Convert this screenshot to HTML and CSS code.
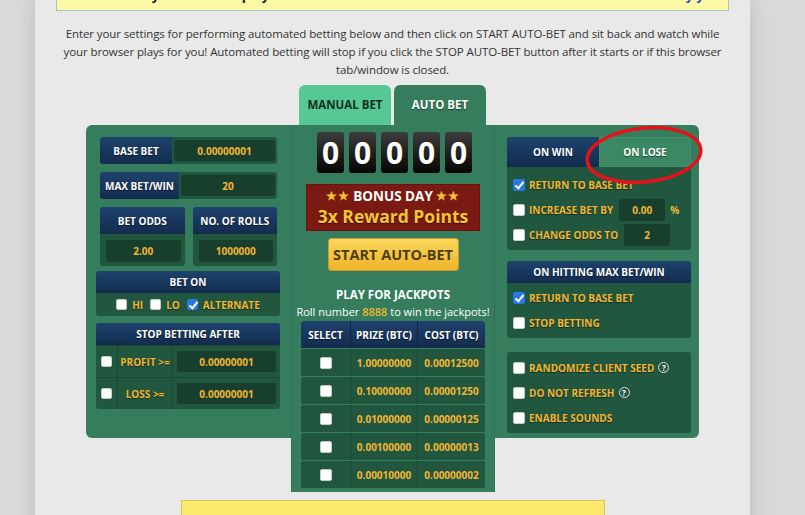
FILE: index.html
```html
<!DOCTYPE html>
<html lang="en">
<head>
    <meta charset="UTF-8">
    <meta name="viewport" content="width=device-width, initial-scale=1.0">
    <title>Auto Bet</title>
    <link rel="stylesheet" href="styles.css">
</head>
<body>
    <div class="page">
        <div class="notice">Auto-bet is only available to players who have verified their email address and enabled 2FA. <a href="#">Verify your email address</a></div>

        <p class="intro">Enter your settings for performing automated betting below and then click on START AUTO-BET and sit back and watch while your browser plays for you! Automated betting will stop if you click the STOP AUTO-BET button after it starts or if this browser tab/window is closed.</p>

        <div class="bet-tabs">
            <a class="bet-tab manual" href="#">MANUAL BET</a>
            <a class="bet-tab auto" href="#">AUTO BET</a>
        </div>

        <div class="board">
            <div class="side side-left">
                <div class="field-row">
                    <div class="field-lbl">BASE BET</div>
                    <div class="field-val"><div class="field-inp">0.00000001</div></div>
                </div>
                <div class="field-row">
                    <div class="field-lbl">MAX BET/WIN</div>
                    <div class="field-val"><div class="field-inp">20</div></div>
                </div>
                <div class="pair">
                    <div class="pair-box">
                        <div class="box-head tall">BET ODDS</div>
                        <div class="pair-body"><div class="field-inp">2.00</div></div>
                    </div>
                    <div class="pair-box">
                        <div class="box-head tall">NO. OF ROLLS</div>
                        <div class="pair-body"><div class="field-inp">1000000</div></div>
                    </div>
                </div>
                <div class="group">
                    <div class="box-head">BET ON</div>
                    <div class="bet-on-body">
                        <span class="cb"></span><span class="opt">HI</span>
                        <span class="cb"></span><span class="opt">LO</span>
                        <span class="cb on"></span><span class="opt">ALTERNATE</span>
                    </div>
                </div>
                <div class="group">
                    <div class="box-head">STOP BETTING AFTER</div>
                    <div class="stop-row">
                        <div class="stop-cb"><span class="cb"></span></div>
                        <div class="stop-lbl">PROFIT &gt;=</div>
                        <div class="stop-val"><div class="field-inp">0.00000001</div></div>
                    </div>
                    <div class="stop-row">
                        <div class="stop-cb"><span class="cb"></span></div>
                        <div class="stop-lbl">LOSS &gt;=</div>
                        <div class="stop-val"><div class="field-inp">0.00000001</div></div>
                    </div>
                </div>
            </div>

            <div class="center">
                <div class="counter">
                    <span class="digit">0</span>
                    <span class="digit">0</span>
                    <span class="digit">0</span>
                    <span class="digit">0</span>
                    <span class="digit">0</span>
                </div>
                <div class="bonus">
                    <div class="bonus-top"><span class="stars">★★</span> BONUS DAY <span class="stars">★★</span></div>
                    <div class="bonus-main">3x Reward Points</div>
                </div>
                <button class="start-btn">START AUTO-BET</button>
                <div class="jp-title">PLAY FOR JACKPOTS</div>
                <div class="jp-sub">Roll number <span class="hl">8888</span> to win the jackpots!</div>
                <div class="jp-table">
                    <div class="jp-head">
                        <span class="c1">SELECT</span><span class="c2">PRIZE (BTC)</span><span class="c3">COST (BTC)</span>
                    </div>
                    <div class="jp-row">
                        <span class="c1"><span class="cb big"></span></span><span class="c2">1.00000000</span><span class="c3">0.00012500</span>
                    </div>
                    <div class="jp-row">
                        <span class="c1"><span class="cb big"></span></span><span class="c2">0.10000000</span><span class="c3">0.00001250</span>
                    </div>
                    <div class="jp-row">
                        <span class="c1"><span class="cb big"></span></span><span class="c2">0.01000000</span><span class="c3">0.00000125</span>
                    </div>
                    <div class="jp-row">
                        <span class="c1"><span class="cb big"></span></span><span class="c2">0.00100000</span><span class="c3">0.00000013</span>
                    </div>
                    <div class="jp-row">
                        <span class="c1"><span class="cb big"></span></span><span class="c2">0.00010000</span><span class="c3">0.00000002</span>
                    </div>
                </div>
            </div>

            <div class="side side-right">
                <div class="win-lose">
                    <div class="wl-tabs">
                        <div class="wl-tab win">ON WIN</div>
                        <div class="wl-tab lose">ON LOSE</div>
                    </div>
                    <div class="opt-list first">
                        <div class="opt-row"><span class="cb big on"></span><span class="opt">RETURN TO BASE BET</span></div>
                        <div class="opt-row"><span class="cb big"></span><span class="opt">INCREASE BET BY</span><span class="mini-inp">0.00</span><span class="pct">%</span></div>
                        <div class="opt-row"><span class="cb big"></span><span class="opt">CHANGE ODDS TO</span><span class="mini-inp">2</span></div>
                    </div>
                </div>
                <div class="right-box">
                    <div class="box-head">ON HITTING MAX BET/WIN</div>
                    <div class="opt-list">
                        <div class="opt-row"><span class="cb big on"></span><span class="opt">RETURN TO BASE BET</span></div>
                        <div class="opt-row"><span class="cb big"></span><span class="opt">STOP BETTING</span></div>
                    </div>
                </div>
                <div class="right-box extra">
                    <div class="opt-list">
                        <div class="opt-row"><span class="cb big"></span><span class="opt">RANDOMIZE CLIENT SEED</span><span class="help">?</span></div>
                        <div class="opt-row"><span class="cb big"></span><span class="opt">DO NOT REFRESH</span><span class="help">?</span></div>
                        <div class="opt-row"><span class="cb big"></span><span class="opt">ENABLE SOUNDS</span></div>
                    </div>
                </div>
            </div>

            <!-- marker ring around the ON LOSE tab -->
            <svg class="ring" width="124" height="66" viewBox="0 0 124 66">
                <ellipse cx="61" cy="33" rx="57" ry="27" transform="rotate(-6 61 33)" fill="none" stroke="#e5121b" stroke-width="3.5"/>
            </svg>
        </div>

        <div class="footer-note"></div>
    </div>
</body>
</html>
```

FILE: styles.css
```css
body{
    margin:0px;
    padding:0px;
    background-color:#d9d9d9;
    font-family:"Open Sans", sans-serif;
    color:#333;
}

.page{
    width:715px;
    min-height:560px;
    margin-left:35px;
    background-color:#e9e9e9;
    box-shadow:0 0 20px rgba(0,0,0,.14);
    display:flow-root;
}

.notice{
    box-sizing:border-box;
    height:31px;
    margin:-20px 21px 0;
    padding-top:6px;
    background-color:#fcf8a5;
    border:1px solid #a9c5c0;
    font-size:13px;
    font-weight:700;
    line-height:16px;
    text-align:center;
    color:#111;
    overflow:hidden;
    white-space:nowrap;
}

.notice a{
    color:#1d3fd6;
    text-decoration:none;
}

.intro{
    margin:14px 20px 0;
    font-size:11.5px;
    letter-spacing:-0.1px;
    line-height:18px;
    text-align:center;
}

.bet-tabs{
    display:flex;
    justify-content:center;
    gap:3px;
    margin-top:6px;
}

.bet-tab{
    width:92px;
    height:40px;
    line-height:40px;
    text-align:center;
    border-radius:6px 6px 0 0;
    font-size:11.5px;
    font-weight:700;
    text-decoration:none;
}

.bet-tab.manual{
    background-color:#56c895;
    color:#12301f;
}

.bet-tab.auto{
    background-color:#357d5d;
    color:#fff;
    text-shadow:0 1px 1px rgba(0,0,0,.5);
}

/* three columns, the middle one runs past the bottom of the sides */
.board{
    position:relative;
    display:grid;
    grid-template-columns:205px 204px 204px;
    grid-template-rows:313px auto;
    width:613px;
    margin:0 auto;
}

.side{
    grid-row:1;
    background-color:#357d5d;
}

.side-left{
    grid-column:1;
    border-radius:6px 0 0 6px;
    padding:12px 14px 0;
}

.side-right{
    grid-column:3;
    border-radius:0 6px 6px 0;
    padding:12px 8px 0 12px;
}

.field-row{
    display:flex;
    height:27px;
    margin-bottom:8px;
}

.field-lbl, .box-head{
    display:flex;
    align-items:center;
    justify-content:center;
    background:linear-gradient(#1e426d, #132c4e);
    color:#fff;
    font-size:10px;
    font-weight:700;
    text-shadow:0 1px 1px rgba(0,0,0,.6);
    white-space:nowrap;
}

.field-lbl{
    box-sizing:border-box;
    min-width:72px;
    padding:0 5px;
    border-radius:3px 0 0 3px;
}

.field-val{
    flex:1;
    padding:3px 2px;
    background-color:#22573f;
    border-radius:0 3px 3px 0;
}

.field-inp{
    display:flex;
    align-items:center;
    justify-content:center;
    height:100%;
    background-color:#183f2e;
    border-radius:2px;
    color:#f2b632;
    font-size:10px;
    font-weight:700;
}

.pair{
    display:flex;
    gap:8px;
    margin-bottom:5px;
}

.pair-box{
    flex:1;
}

.box-head{
    height:22px;
    border-radius:3px 3px 0 0;
}

.box-head.tall{
    height:27px;
}

.pair-body{
    height:22px;
    padding:6px 4px 4px 6px;
    background-color:#22573f;
    border-radius:0 0 3px 3px;
}

.group{
    margin:0 -3px 7px -4px;
    background-color:#22573f;
    border-radius:3px;
}

.bet-on-body{
    display:flex;
    align-items:center;
    justify-content:center;
    height:23px;
}

.cb{
    position:relative;
    display:inline-block;
    box-sizing:border-box;
    width:11px;
    height:11px;
    flex:none;
    background-color:#fff;
    border:1px solid #c9c9c9;
    border-radius:2px;
}

.cb.big{
    width:12px;
    height:12px;
}

.cb.on{
    background-color:#2a77e6;
    border-color:#2a77e6;
}

.cb.on::after{
    content:"";
    position:absolute;
    left:3px;
    top:0px;
    width:3px;
    height:7px;
    border:solid #fff;
    border-width:0 2px 2px 0;
    transform:rotate(40deg);
}

.opt{
    color:#f2b632;
    font-size:10px;
    font-weight:700;
    text-shadow:0 1px 1px rgba(0,0,0,.5);
    white-space:nowrap;
}

.bet-on-body .opt{
    margin:0 7px 0 5px;
}

.bet-on-body .opt:last-child{
    margin-right:0;
}

.stop-row{
    display:flex;
    height:31px;
    border-top:1px solid #1a4632;
}

.stop-cb{
    display:flex;
    align-items:center;
    justify-content:center;
    width:21px;
    border-right:1px solid #1a4632;
}

.stop-lbl{
    display:flex;
    align-items:center;
    justify-content:center;
    width:54px;
    border-right:1px solid #1a4632;
    color:#f2b632;
    font-size:10px;
    font-weight:700;
    text-shadow:0 1px 1px rgba(0,0,0,.5);
}

.stop-val{
    flex:1;
    padding:5px 4px;
}

.center{
    grid-column:2;
    grid-row:1 / span 2;
    padding:7px 0 4px;
    background-color:#357d5d;
    border-left:1px solid #2d7254;
    border-right:1px solid #2d7254;
    text-align:center;
}

.counter{
    display:flex;
    justify-content:center;
    gap:5px;
    margin-left:3px;
}

.digit{
    width:27px;
    height:41px;
    line-height:41px;
    background:linear-gradient(#3d3d3d, #050505);
    border-radius:3px;
    color:#fff;
    font-size:30px;
    font-weight:700;
}

.bonus{
    box-sizing:border-box;
    width:174px;
    height:47px;
    margin:11px auto 0;
    padding-top:2px;
    background-color:#7b1a12;
    border:1px solid #6b140d;
}

.bonus-top{
    line-height:17px;
    color:#fff;
    font-size:13.5px;
    font-weight:700;
}

.stars{
    color:#f3c42e;
    font-size:11.5px;
    letter-spacing:1px;
    vertical-align:1px;
}

.bonus-main{
    line-height:22px;
    color:#f5c634;
    font-size:17.5px;
    font-weight:700;
    text-shadow:0 1px 1px rgba(0,0,0,.6);
}

.start-btn{
    display:block;
    width:131px;
    height:33px;
    margin:7px auto 0;
    padding:0;
    background:linear-gradient(#f9d85c, #efb22a);
    border:1px solid #c99a2a;
    border-radius:3px;
    color:#4d3e12;
    font-family:"Open Sans", sans-serif;
    font-size:14.5px;
    font-weight:700;
}

.jp-title{
    margin-top:15px;
    line-height:17px;
    color:#fff;
    font-size:11.5px;
    font-weight:700;
}

.jp-sub{
    line-height:17px;
    color:#fff;
    font-size:11px;
}

.jp-sub .hl{
    color:#f2b632;
    font-weight:600;
}

.jp-table{
    width:184px;
    margin:1px auto 0;
}

.jp-head, .jp-row{
    display:flex;
    height:27px;
}

.jp-head{
    background:linear-gradient(#1e426d, #132c4e);
    border-radius:3px 3px 0 0;
    color:#fff;
    font-size:10px;
    font-weight:700;
    text-shadow:0 1px 1px rgba(0,0,0,.6);
}

.jp-row{
    margin-top:1px;
    background-color:#22573f;
    border-radius:2px;
    color:#f2b632;
    font-size:10px;
    font-weight:700;
}

.jp-head span, .jp-row > span{
    display:flex;
    align-items:center;
    justify-content:center;
    box-sizing:border-box;
}

.c1{
    width:50px;
    border-right:1px solid #1a4632;
}

.c2{
    width:67px;
    border-right:1px solid #1a4632;
}

.c3{
    width:67px;
}

.jp-head .c1, .jp-head .c2{
    border-right-color:#102540;
}

.win-lose, .right-box{
    background-color:#22573f;
    border-radius:3px;
    overflow:hidden;
}

.wl-tabs{
    display:flex;
    height:30px;
}

.wl-tab{
    flex:1;
    display:flex;
    align-items:center;
    justify-content:center;
    color:#fff;
    font-size:10px;
    font-weight:700;
    text-shadow:0 1px 1px rgba(0,0,0,.5);
}

.wl-tab.win{
    background:linear-gradient(#1e426d, #132c4e);
}

.wl-tab.lose{
    background-color:#3b8865;
    box-shadow:inset 0 0 0 1px #458f6d;
}

.opt-list{
    padding:3px 0 3px 6px;
}

.opt-list.first{
    padding-top:5px;
}

.opt-row{
    display:flex;
    align-items:center;
    height:25px;
}

.opt-row .opt{
    margin-left:4px;
}

.mini-inp{
    display:flex;
    align-items:center;
    justify-content:center;
    width:46px;
    height:22px;
    margin-left:6px;
    background-color:#183f2e;
    border-radius:2px;
    color:#f2b632;
    font-size:10px;
    font-weight:700;
}

.pct{
    margin-left:5px;
    color:#f2b632;
    font-size:10px;
    font-weight:700;
}

.right-box{
    margin-top:11px;
}

.right-box .opt-list{
    padding-top:2px;
}

.right-box.extra{
    margin-top:14px;
}

.right-box.extra .opt-list{
    padding-top:3px;
}

.help{
    display:inline-flex;
    align-items:center;
    justify-content:center;
    box-sizing:border-box;
    width:11px;
    height:11px;
    margin-left:4px;
    border:1px solid #d8e4dd;
    border-radius:50%;
    color:#fff;
    font-size:8px;
    font-weight:700;
}

.ring{
    position:absolute;
    left:497px;
    top:-3px;
    overflow:visible;
}

.footer-note{
    width:422px;
    height:40px;
    margin:8px auto 0;
    background-color:#fbe96b;
    border:1px solid #d6c75a;
}
```
